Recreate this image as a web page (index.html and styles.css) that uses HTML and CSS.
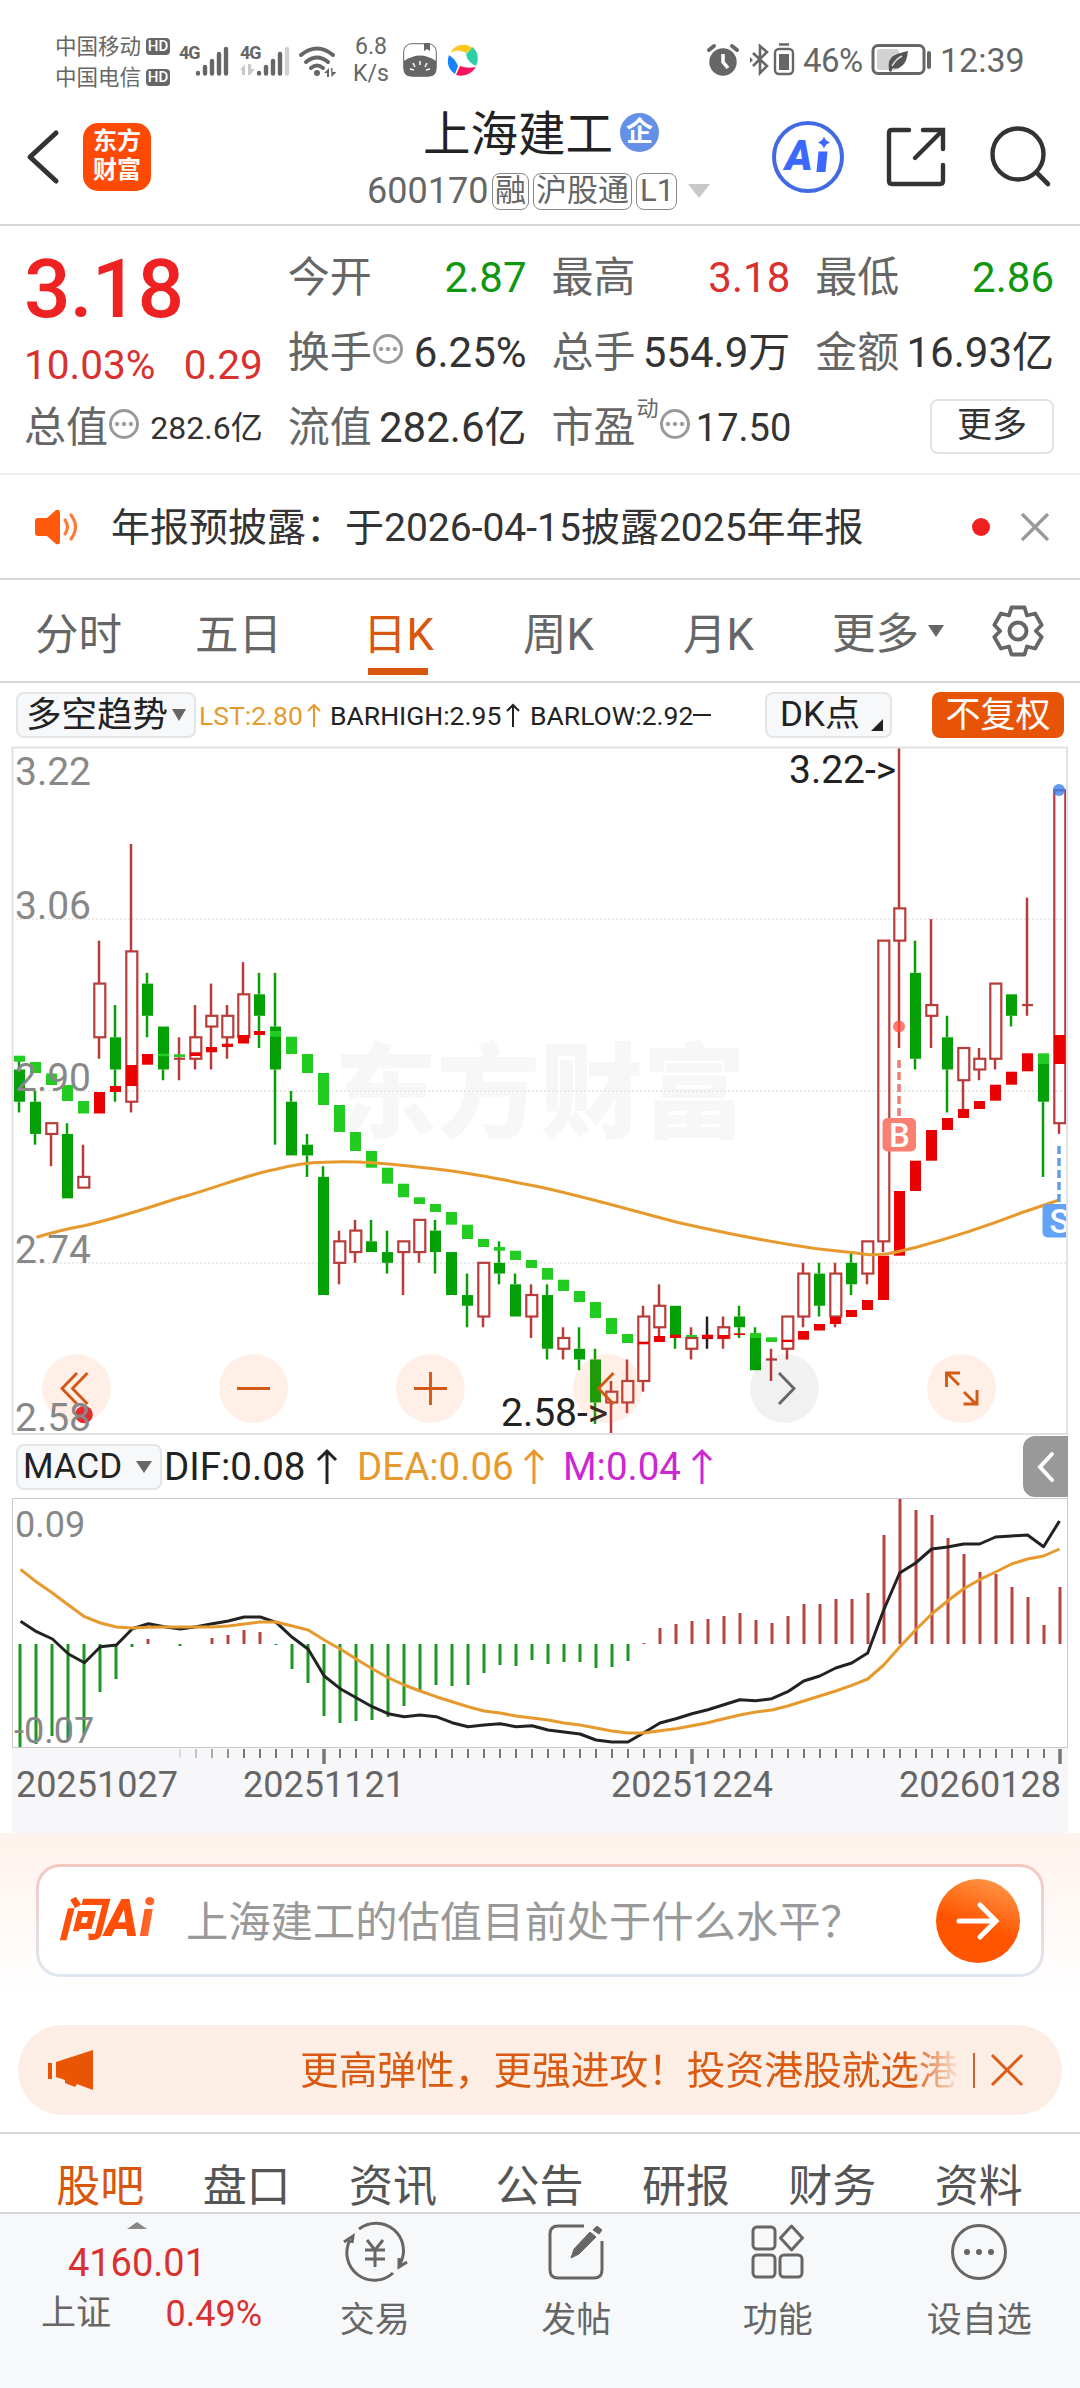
FILE: index.html
```html
<!DOCTYPE html>
<html lang="zh-CN">
<head>
<meta charset="utf-8">
<title>上海建工 600170</title>
<link rel="stylesheet" href="styles.css">
</head>
<body>
<div class="status">
  <div class="carriers">
    <div class="carrier">中国移动<span class="hd">HD</span></div>
    <div class="carrier">中国电信<span class="hd">HD</span></div>
  </div>
  <svg class="signals" width="160" height="40" viewBox="0 0 160 40" fill="#666">
    <text x="0" y="19" class="g4">4G</text><text x="61" y="19" class="g4">4G</text>
    <g stroke="#666" stroke-width="4.4" stroke-linecap="round"><path d="M19 33v.5M26 27v6.500M33 21v12.500M40 14v19.500M47 9v24.500M80 33v.5M87 27v6.500M94 21v12.500M101 14v19.500"/><path stroke="#d0d0d0" d="M108 9v24.500"/></g>
    <path fill="#c8c8c8" d="M61 30l5-6v11h-3v-5zM69 24h3v5h4l-5 6h-2z"/>
    <g fill="none" stroke="#666" stroke-width="4" stroke-linecap="round"><path d="M122 15q16-13 32 0M127 22q11-9 22 0M132 28q6-5 12 0"/></g>
    <circle cx="138" cy="33" r="3"/><path d="M145 33l5-5v9h-2v-4zM152 28h1.500v4h4l-5 5z"/>
  </svg>
  <div class="speed">6.8<br>K/s</div>
  <svg class="melon" width="34" height="34" viewBox="0 0 34 34"><rect x=".7" y=".7" width="32.600" height="32.600" rx="8" fill="#fff" stroke="#666"/><path fill="#666" d="M21 0h6v8l-3-2-3 2zM1 18q16-11 32 0v9q0 6-6 6H7q-6 0-6-6z"/><path stroke="#fff" stroke-width="1.500" d="M17 18v4M10 20l2 4M24 20l-2 4M7 26l4 1M27 26l-4 1"/></svg>
  <svg class="pinwheel" width="34" height="34" viewBox="0 0 34 34"><path fill="#ffc61a" d="M4 10Q10 0 21 2l6 3-7 5Q12 5 4 10z"/><path fill="#2fcfa5" d="M27 4q8 9 3 19Q21 19 20 11z"/><path fill="#f8145c" d="M30 24q-7 11-20 8l4-9q8 3 16 1z"/><path fill="#1483fa" d="M3 12q7 5 9 11l-3 8Q-1 24 3 12z"/></svg>
  <svg class="alarm" width="92" height="34" viewBox="0 0 92 34"><circle cx="18" cy="19" r="13.700" fill="#666"/><path d="M18 11v8l5 6" stroke="#fff" stroke-width="3.500" fill="none"/><path d="M4 7l5-4M32 7l-5-4" stroke="#666" stroke-width="4" stroke-linecap="round"/>
    <path d="M48 10l14 13-7 7V3l7 6-14 14" fill="none" stroke="#666" stroke-width="2.600"/><path d="M45 14l3 3-3 3z" fill="#666"/>
    <rect x="70" y="6" width="18" height="25" rx="4" fill="none" stroke="#666" stroke-width="2.400"/><path d="M74 1.500h10" stroke="#666" stroke-width="2.500"/><rect x="74" y="11" width="10" height="16" fill="#666"/></svg>
  <span class="pct">46%</span>
  <svg class="batt" width="62" height="34" viewBox="0 0 62 34"><rect x="2" y="2.500" width="51" height="28" rx="5" fill="none" stroke="#666" stroke-width="3"/><rect x="6" y="6" width="22" height="21" rx="3" fill="#d2d2d2"/><path d="M18 28q-2-13 6-16 4-2 13-4-1 10-5 14-5 5-10 3l-2 4z" fill="#555"/><path d="M21 23q4-7 10-10" stroke="#ddd" stroke-width="1.500" fill="none"/><path d="M58 10v14" stroke="#666" stroke-width="4" stroke-linecap="round"/></svg>
  <span class="clock">12:39</span>
</div>

<header class="header">
  <svg class="back" width="34" height="56" viewBox="0 0 34 56"><path d="M30 4L4 28l26 24" fill="none" stroke="#333" stroke-width="5" stroke-linecap="round" stroke-linejoin="round"/></svg>
  <div class="logo">东方<br>财富</div>
  <div class="title">
    <div class="name">上海建工<span class="ent">企</span></div>
    <div class="code"><span>600170</span><i>融</i><i>沪股通</i><i>L1</i><b></b></div>
  </div>
  <svg class="ai" width="74" height="74" viewBox="0 0 74 74"><circle cx="37" cy="37" r="34" fill="none" stroke="#4169e1" stroke-width="4"/><text x="14" y="50" class="aitext">A</text><path fill="#3d68ff" d="M47.500 31.500h9l-2 20.500h-9zM53 16.500q1.500 4.500 6 6-4.500 1.500-6 6-1.500-4.500-6-6 4.500-1.500 6-6z"/></svg>
  <svg class="share" width="60" height="60" viewBox="0 0 60 60"><path d="M23 3H6q-3 0-3 3v48q0 3 3 3h48q3 0 3-3V38M37 3h20v19M57 3L29 31" fill="none" stroke="#333" stroke-width="4.400" stroke-linecap="round"/></svg>
  <svg class="search" width="60" height="60" viewBox="0 0 60 60"><circle cx="27" cy="28" r="25.500" fill="none" stroke="#333" stroke-width="4.400"/><path d="M46 47l11 11" stroke="#333" stroke-width="4.600" stroke-linecap="round"/></svg>
</header>

<section class="stats">
  <div class="quote"><div class="price">3.18</div><div class="chg"><span>10.03%</span><span>0.29</span></div></div>
  <div class="cell"><label>今开</label><span class="g">2.87</span></div>
  <div class="cell"><label>最高</label><span class="r">3.18</span></div>
  <div class="cell"><label>最低</label><span class="g">2.86</span></div>
  <div class="cell"><label>换手</label><em></em><span>6.25%</span></div>
  <div class="cell"><label>总手</label><span>554.9万</span></div>
  <div class="cell"><label>金额</label><span>16.93亿</span></div>
  <div class="cell"><label>总值</label><em></em><span class="small">282.6亿</span></div>
  <div class="cell"><label>流值</label><span>282.6亿</span></div>
  <div class="cell"><label>市盈</label><sup>动</sup><em></em><span class="mid">17.50</span></div>
  <div class="cell"><button class="more">更多</button></div>
</section>

<section class="notice">
  <svg width="46" height="38" viewBox="0 0 46 38"><path fill="#ff5a0a" d="M4 10h9L22 2q4-1 4 3v28q0 4-4 3l-9-8H4q-3 0-3-3V13q0-3 3-3z"/><path d="M31 12q5 7 0 14M37 7q9 12 0 24" fill="none" stroke="#ff7b38" stroke-width="3.200" stroke-linecap="round"/></svg>
  <p>年报预披露：于2026-04-15披露2025年年报</p>
  <span class="dot"></span>
  <svg class="x" width="30" height="30" viewBox="0 0 30 30"><path d="M2 2l26 26M28 2L2 28" stroke="#999" stroke-width="3.200"/></svg>
</section>

<nav class="periods">
  <a>分时</a><a>五日</a><a class="on">日K</a><a>周K</a><a>月K</a><a class="drop">更多<b></b></a>
  <svg width="54" height="54" viewBox="-27 -27 54 54"><g fill="none" stroke="#666" stroke-width="4" stroke-linejoin="round"><path transform="scale(.94)" d="M-7-25H7l2.500 8.500 8.700-2.100 7 12.200L19 0l6.200 6.400-7 12.200-8.700-2.100L7 25H-7l-2.500-8.500-8.700 2.100-7-12.200L-19 0l-6.200-6.400 7-12.200 8.700 2.100z"/><circle r="8.500"/></g></svg>
</nav>

<div class="indicator">
  <div class="pill trend">多空趋势<b></b></div>
  <span class="val o">LST:2.80</span><svg class="up o" viewBox="0 0 14 24"><path d="M7 24V2M1 8l6-6 6 6"/></svg>
  <span class="val high">BARHIGH:2.95</span><svg class="up" viewBox="0 0 14 24"><path d="M7 24V2M1 8l6-6 6 6"/></svg>
  <span class="val low">BARLOW:2.92</span><span class="dash"></span>
  <div class="pill dk">DK点<b></b></div>
  <div class="adj">不复权</div>
</div>

<svg class="kline" width="1080" height="688" viewBox="0 747 1080 688">
  <defs><clipPath id="plot"><rect x="12" y="747" width="1056" height="688"/></clipPath></defs>
  <text class="mark" x="334" y="1130">东方财富</text>
  <path class="grid" d="M12 919H1067M12 1091H1067M12 1263H1067"/>
  <g id="candles"></g><g id="trend"></g>
  <path class="ma" d="M36.500 1237.300C50 1233 60 1230 84 1225.700C130 1215 170 1200 186 1196C220 1186 250 1174 275 1169.500C290 1165.500 305 1162.500 324 1162.200C360 1161 385 1163 420 1167.300C460 1171 500 1179 540 1187C590 1198 630 1210 678 1222.500C720 1232 770 1242 815 1248.500C840 1251 855 1253 867 1254.500C885 1255.500 893 1253 919 1246.500C960 1235 1000 1221 1022 1212.500Q1042 1206 1059 1200"/>
  <g class="axis"><text x="15" y="785">3.22</text><text x="15" y="919">3.06</text><text x="15" y="1091">2.90</text><text x="15" y="1263">2.74</text></g>
  <g class="tag"><text x="789" y="783">3.22-&gt;</text><text x="501" y="1426">2.58-&gt;</text></g>
  <path d="M899 1060v56" stroke="#f08070" stroke-width="3.500" stroke-dasharray="8 4"/><circle cx="899" cy="1026.500" r="6" fill="#ff4d3c" opacity=".75"/>
  <rect x="882.500" y="1118" width="33.500" height="33.500" rx="5" fill="#f97f70"/><text class="bs" x="899.500" y="1147">B</text>
  <g clip-path="url(#plot)"><path d="M1059 1146v57" stroke="#5f9fe8" stroke-width="3.500" stroke-dasharray="8 4"/><circle cx="1059" cy="790" r="6" fill="#3a7fee" opacity=".8"/><rect x="1042.500" y="1204" width="33.500" height="33.500" rx="5" fill="#62a2f8"/><text class="bs" x="1059.500" y="1233">S</text></g>
  <g fill="#ff6e28" fill-opacity=".11"><circle cx="76.500" cy="1388.500" r="34.500"/><circle cx="253.500" cy="1388.500" r="34.500"/><circle cx="430.500" cy="1388.500" r="34.500"/><circle cx="607.500" cy="1388.500" r="34.500"/><circle cx="961.500" cy="1388.500" r="34.500"/></g>
  <circle cx="784.500" cy="1388.500" r="34.500" fill-opacity=".055"/>
  <path d="M77 1373l-15 15.500 15 15.500M87.500 1373l-15 15.500 15 15.500M237 1388.500h33M414 1388.500h33M430.500 1372v33M613.500 1373l-15 15.500 15 15.500M959 1385l-12.500-12.500M946.500 1387v-14h13.500M964 1392l12.500 12.500M977 1390v14h-13.500" fill="none" stroke="#d25a14" stroke-width="2.900"/>
  <path d="M779 1373l15 15.500-15 15.500" fill="none" stroke="#666" stroke-width="2.900"/>
  <circle cx="84" cy="1414.500" r="8.800" fill="#e52d2d"/>
  <text class="axlast" x="15" y="1431">2.58</text>
  <path class="frame" d="M12.500 747.500H1067V1434H12.500z"/>
</svg>

<div class="macdbar">
  <div class="pill macd">MACD<b></b></div>
  <span>DIF:0.08</span><svg class="up2" viewBox="0 0 20 35"><path d="M10 35V2M1 11l9-9 9 9"/></svg>
  <span class="o dea">DEA:0.06</span><svg class="up2 o" viewBox="0 0 20 35"><path d="M10 35V2M1 11l9-9 9 9"/></svg>
  <span class="m">M:0.04</span><svg class="up2 m" viewBox="0 0 20 35"><path d="M10 35V2M1 11l9-9 9 9"/></svg>
  <div class="fold"><svg width="16" height="30" viewBox="0 0 16 30"><path d="M14 2L2 15l12 13" fill="none" stroke="#fff" stroke-width="4" stroke-linecap="round"/></svg></div>
</div>

<svg class="macdplot" width="1080" height="335" viewBox="0 1498 1080 335">
  <rect x="12" y="1748" width="1056" height="85" fill="#f7f7fa"/>
  <g id="hist"></g>
  <polyline id="dif" class="line" stroke="#222"/><polyline id="dea" class="line" stroke="#e69a2e"/>
  <path d="M12.500 1498.500H1067.500V1747.500H12.500z" fill="none" stroke="#c8c8c8"/>
  <g class="maxis"><text x="15" y="1537">0.09</text><text x="14" y="1743">-0.07</text></g>
  <g id="ticks" stroke="#777"></g>
  <g class="dates"><text x="16" y="1797">20251027</text><text x="243" y="1797">20251121</text><text x="611" y="1797">20251224</text><text x="899" y="1797">20260128</text></g>
</svg>

<section class="ask">
  <div class="askbox">
    <span class="asklogo"><u>问</u>Ai</span>
    <span class="q">上海建工的估值目前处于什么水平？</span>
    <span class="go"><svg width="44" height="38" viewBox="0 0 44 38"><path d="M3 19h36M24 3l16 16-16 16" fill="none" stroke="#fff" stroke-width="5" stroke-linecap="round"/></svg></span>
  </div>
</section>

<div class="banner">
  <svg width="46" height="40" viewBox="0 0 46 40"><path fill="#ea5504" d="M0 13h4v16H0zM8 12L45 0v40l-16-6-2 3-10-4v-3l-9-3z"/></svg>
  <p>更高弹性，更强进攻！投资港股就选港</p>
  <i></i>
  <svg class="bx" width="34" height="34" viewBox="0 0 34 34"><path d="M2 2l30 30M32 2L2 32" stroke="#e05a14" stroke-width="3"/></svg>
</div>

<nav class="sections"><a class="on">股吧</a><a>盘口</a><a>资讯</a><a>公告</a><a>研报</a><a>财务</a><a>资料</a></nav>

<footer class="dock">
  <div class="index"><b></b><strong>4160.01</strong><div><span>上证</span><em>0.49%</em></div></div>
  <a><svg viewBox="-33 -30 66 60"><path d="M-16-23A27.500 27.500 0 0 1 25 12M18 21A27.500 27.500 0 0 1-25-12M-31-10l9-6-1 7M32 10l-8 5V6M-8-12L0-2 8-12M0-2v17M-10-2h20M-10 7h20"/></svg>交易</a>
  <a><svg viewBox="-33 -30 66 60"><path d="M8-26H-18Q-26-26-26-18V18Q-26 26-18 26H18Q26 26 26 18V-11"/><path d="M-5 6l3-9L14-20l6 5L3 2zM17-22l4-4 5 4-3 4z" fill="#666" stroke-width="1"/></svg>发帖</a>
  <a><svg viewBox="-33 -30 66 60"><rect x="-25" y="-25" width="22" height="22" rx="4"/><rect x="-25" y="3" width="22" height="22" rx="4"/><rect x="2" y="3" width="22" height="22" rx="4"/><path d="M13.500-26l11 12-11 12-11-12z" stroke-linejoin="round"/></svg>功能</a>
  <a><svg viewBox="-33 -30 66 60"><circle r="26.500"/><g fill="#666" stroke="none"><circle cx="-12" r="3"/><circle r="3"/><circle cx="12" r="3"/></g></svg>设自选</a>
</footer>
<script src="chart.js"></script>
</body>
</html>
```
FILE: styles.css
```css
* { box-sizing: border-box; }
body { margin: 0; width: 1080px; background: #fff; color: #333; font-family: Roboto, "Noto Sans CJK SC", sans-serif; }
p { margin: 0; }
i, em { font-style: normal; }
svg { display: block; flex: none; overflow: visible; }
b { display: block; width: 0; height: 0; }

/* phone status bar */
.status { height: 105px; display: flex; align-items: center; padding: 15px 0 0 55px; color: #666; white-space: nowrap; }
.carriers { width: 117px; margin-top: 3px; }
.carrier { display: flex; align-items: center; font-size: 21.5px; line-height: 31px; height: 31px; }
.hd { margin-left: 5px; width: 24px; height: 17px; border-radius: 4px; background: #666; color: #fff; font-size: 15px; line-height: 17px; text-align: center; font-weight: 500; }
.signals { margin-left: 7px; }
.g4 { font: 700 18px Roboto; letter-spacing: -1px; }
.speed { margin-left: 14px; width: 36px; font-size: 23px; line-height: 27px; text-align: center; }
.melon { margin-left: 14px; }
.pinwheel { margin-left: 9px; }
.alarm { margin-left: 225px; }
.pct { margin-left: 6px; font-size: 33px; width: 64px; letter-spacing: -.5px; }
.batt { margin-left: 4px; }
.clock { margin-left: 7px; font-size: 34px; }

/* title bar */
.header { height: 121px; display: flex; align-items: flex-start; border-bottom: 2px solid #d6d6d6; padding-left: 26px; }
.back { margin-top: 24px; }
.logo { margin: 18px 0 0 23px; width: 68px; height: 68px; border-radius: 15px; background: #ff4a05; color: #fff; font-weight: 700; font-size: 24px; line-height: 29px; text-align: center; padding-top: 4px; }
.title { width: 400px; margin: -3px 0 0 182px; padding-left: 34px; }
.name { display: flex; align-items: center; height: 57px; margin-left: 56px; font-size: 47.500px; color: #222; white-space: nowrap; }
.ent { margin: 3px 0 0 7px; width: 39px; height: 39px; border-radius: 50%; background: #6590e8; color: #fff; font-size: 27px; font-weight: 700; line-height: 38px; text-align: center; }
.code { display: flex; align-items: center; height: 64px; font-size: 36px; color: #666; }
.code span { width: 125px; }
.code i { margin-right: 4px; height: 37px; border: 1.500px solid #888; border-radius: 8px; font-size: 31px; line-height: 34px; padding: 0 2px; }
.code i:nth-of-type(3) { width: 41px; padding: 0 3px; }
.code b { margin-left: 7px; border: 11px solid transparent; border-top: 14px solid #c8c8c8; border-bottom: 0; }
.ai { margin: 15px 0 0 38px; }
.aitext { font: italic 900 42px Roboto; fill: #3d68ff; }
.share { margin: 22px 0 0 41px; }
.search { margin: 21px 0 0 45px; }

/* quote figures */
.stats { height: 249px; border-bottom: 2px solid #eee; padding: 14px 26px 10px 25px; display: grid; grid-template-columns: repeat(4, 1fr); grid-template-rows: repeat(3, 75px); column-gap: 26px; }
.quote { grid-row: span 2; color: #ee2222; }
.price { font-size: 82px; font-weight: 500; line-height: 98px; letter-spacing: -.8px; margin-left: -1px; }
.chg { display: flex; justify-content: space-between; font-size: 40.500px; line-height: 54px; color: #d93030; margin-left: -1px; }
.cell { display: flex; align-items: center; font-size: 42px; line-height: 60px; white-space: nowrap; color: #333; }
.cell label { color: #666; font-size: 42px; margin-left: -1px; }
.cell span { margin-left: auto; }
.g { color: #109610; }
.r { color: #d93030; }
.cell .small { font-size: 32px; }
.cell .mid { font-size: 38px; margin-right: -1px; }
.cell em { width: 30px; height: 30px; border: 3px solid #999; border-radius: 50%; margin: -8px 0 0 1px; background: radial-gradient(circle, #999 1.8px, transparent 2.4px) center / 7px 100% repeat-x content-box; padding: 0 2px; }
.cell sup { font-size: 22px; line-height: 24px; margin: -38px 0 0 1px; color: #666; }
.more { margin-left: auto; width: 124px; height: 55px; border: 2px solid #e2e2e2; border-radius: 8px; background: #fff; font: 35px/48px Roboto, "Noto Sans CJK SC", sans-serif; color: #333; padding: 0; margin-top: -3px; }

/* announcement */
.notice { height: 105px; border-bottom: 2px solid #d9d9d9; display: flex; align-items: center; padding: 0 30px 0 34px; font-size: 39px; }
.notice p { margin: -6px 0 0 31px; flex: 1; white-space: nowrap; }
.dot { width: 18px; height: 18px; border-radius: 50%; background: #f02020; margin-right: 30px; }

/* period tabs */
.periods { height: 103px; border-bottom: 2px solid #d6d6d6; display: flex; align-items: center; font-size: 43.500px; color: #666; }
.periods a { width: 160px; height: 101px; line-height: 111px; text-align: center; padding-right: 3px; }
.periods .on { color: #d8560d; background: linear-gradient(#d8560d, #d8560d) 48px 88px / 60px 7px no-repeat; }
.periods .drop { display: flex; justify-content: center; align-items: center; padding: 8px 0 0 16px; }
.drop b { margin: -8px 0 0 9px; border: 8px solid transparent; border-top: 12px solid #666; border-bottom: 0; }
.periods svg { margin-left: 31px; }

/* overlay indicator readings */
.indicator { height: 64px; display: flex; align-items: center; padding: 0 16px 0; white-space: nowrap; color: #222; }
.pill { height: 46px; border: 2px solid #e4e5e9; border-radius: 8px; background: #f7f8fa; display: flex; align-items: center; color: #222; line-height: 42px; }
.trend { width: 180px; padding-left: 8px; font-size: 35.500px; }
.trend b { margin-left: 4px; border: 7px solid transparent; border-top: 12px solid #666; border-bottom: 0; }
.val { font-size: 26.500px; margin-left: 3px; width: 103px; }
.val.high { margin-left: 9px; width: 171px; }
.val.low { margin-left: 10px; width: 160px; }
.o { color: #e69a2e; }
.m { color: #cc28d2; }
.up { width: 14px; height: 24px; margin-left: 5px; fill: none; stroke: currentColor; stroke-width: 2; }
.dash { width: 18px; height: 2px; background: #222; margin-left: 3px; }
.dk { margin-left: auto; width: 127px; padding-left: 13px; font-size: 35px; }
.dk b { margin: 20px 0 0 11px; border-left: 12px solid transparent; border-bottom: 12px solid #222; }
.adj { margin-left: 40px; width: 132px; height: 46px; border-radius: 8px; background: #e85407; color: #fff; font-size: 35px; line-height: 47px; text-align: center; }

/* candlestick plot */
.mark { font: 900 103px "Noto Sans CJK SC"; fill: #f7f7f7; }
.grid { stroke: #e4e4e4; stroke-width: 1.500; stroke-dasharray: 2 2; }
.frame { fill: none; stroke: #e2e2e2; stroke-width: 2; }
.ma { fill: none; stroke: #e69a2e; stroke-width: 3; }
.axis, .axlast { font: 39px Roboto; fill: #888; }
.tag { font: 39px Roboto; fill: #222; }
.bs { font: 500 33px Roboto; fill: #fff; text-anchor: middle; }

/* MACD */
.macdbar { height: 63px; display: flex; align-items: center; padding-left: 16px; font-size: 38.500px; color: #222; white-space: nowrap; }
.macd { width: 146px; font-size: 35px; padding-left: 5px; }
.macd b { margin-left: 14px; border: 8px solid transparent; border-top: 12px solid #666; border-bottom: 0; }
.macdbar span { margin-left: 2px; width: 146px; }
.macdbar .dea { margin-left: 20px; width: 160px; }
.macdbar span.m { margin-left: 19px; width: 122px; }
.up2 { width: 20px; height: 35px; margin-left: 7px; fill: none; stroke: currentColor; stroke-width: 3; }
.fold { margin-left: auto; margin-right: 12px; width: 45px; height: 61px; border-radius: 12px 0 0 12px; background: #999; display: flex; align-items: center; justify-content: center; }
.line { fill: none; stroke-width: 3; stroke-linejoin: round; }
.maxis { font: 36px Roboto; fill: #888; }
.dates { font: 36px Roboto; fill: #666; }

/* question box */
.ask { height: 192px; padding: 31px 36px 0; background: linear-gradient(#fff2ec, #fff 160px); }
.askbox { height: 113px; border: 3px solid transparent; border-radius: 24px; background: linear-gradient(#fff, #fff) padding-box, linear-gradient(#f3c8c0, #dfe7f2) border-box; display: flex; align-items: center; padding-left: 19px; }
.asklogo { width: 128px; font: italic 900 51px Roboto, "Noto Sans CJK SC"; white-space: nowrap; letter-spacing: 1px; background: linear-gradient(100deg, #ff4e08 60%, #f89070 85%); -webkit-background-clip: text; background-clip: text; color: transparent; line-height: 60px; margin-top: -2px; }
.asklogo u { font-size: 46px; text-decoration: none; }
.q { font-size: 42.300px; color: #999; white-space: nowrap; margin-top: -5px; }
.go { margin-left: auto; margin-right: 21px; width: 84px; height: 84px; border-radius: 50%; background: linear-gradient(20deg, #ff5500 45%, #ff9a4c 95%); display: flex; align-items: center; justify-content: center; }

/* promotion strip */
.banner { margin: 0 18px; height: 90px; border-radius: 45px; background: #fdeee5; display: flex; align-items: center; padding: 0 38px 0 30px; }
.banner p { margin: -7px 0 0 206px; width: 658px; overflow: hidden; white-space: nowrap; font-size: 38.700px; color: #d95a10; -webkit-mask-image: linear-gradient(90deg, #000 610px, transparent 662px); mask-image: linear-gradient(90deg, #000 610px, transparent 662px); }
.banner i { width: 2px; height: 35px; background: #c8632a; margin-left: 15px; }
.banner .bx { margin-left: auto; }

/* content tabs */
.sections { margin-top: 17px; height: 82px; border-top: 2px solid #d8d9dc; border-bottom: 2px solid #d3d5da; display: flex; padding: 0 28px 0 27px; font-size: 44px; color: #555; overflow: hidden; }
.sections a { flex: 1; text-align: center; line-height: 107px; }
.sections .on { color: #d8560d; }

/* bottom dock */
.dock { height: 174px; background: #f7f8fa; display: flex; color: #666; font-size: 35px; }
.dock a { flex: 1; display: flex; flex-direction: column; align-items: center; line-height: 50px; }
.dock a svg { width: 66px; height: 60px; margin: 8px 0 14px; fill: none; stroke: #666; stroke-width: 3; }
.index { width: 274px; display: flex; flex-direction: column; align-items: center; }
.index b { margin-top: 8px; border: 10px solid transparent; border-bottom: 7px solid #888; border-top: 0; }
.index strong { font-size: 38px; line-height: 46px; font-weight: 400; color: #d93030; margin-top: 11px; }
.index div { width: 220px; display: flex; justify-content: space-between; margin: 3px 0 0 31px; align-self: flex-start; padding-left: 10px; line-height: 50px; }
.index em { font-size: 36px; color: #d93030; margin-right: -11px; }
```
FILE: chart.js
```js
// Each candle: high, body top, body bottom, low (in cents) and r(ise), g(fall), k(flat)
const candles = `293 292 289 288 g|290 289 286 285 g|287 287 286 283 r|287 286 280 280 g|285 282 281 281 r|304 300 295 293 r|298 295 292 289 g|313 303 289 288 r|301 300 297 295 g|296 296 292 291 g|295 293 293 291 r|298 295 293 292 r|300 297 296 292 r|298 297 295 293 r|302 299 295 295 r|301 299 297 294 g|301 296 292 285 g|290 289 284 284 g|286 285 284 282 g|283 282 271 271 g|277 276 274 272 r|278 277 275 274 r|278 276 275 275 g|277 275 274 273 g|276 276 275 271 r|278 278 275 274 r|278 277 275 273 g|275 275 271 271 g|273 271 270 268 g|274 274 269 268 r|276 274 273 272 g|273 272 269 269 g|272 271 269 267 r|272 271 266 265 g|268 267 266 265 r|268 266 265 264 g|266 265 261 259 g|263 262 261 258 r|265 263 261 260 r|270 269 263 262 r|272 270 268 267 r|270 270 267 266 g|268 267 266 265 r|269 267 267 266 k|269 268 267 266 r|270 269 268 267 g|268 267 264 264 g|266 265 265 263 r|269 269 266 265 r|274 273 269 268 r|274 273 270 269 g|274 273 269 268 r|275 274 272 271 g|276 276 273 272 r|304 304 276 275 r|322 307 304 294 r|304 301 293 292 g|306 298 297 294 r|297 295 292 288 g|294 294 291 288 r|294 293 292 291 r|300 300 293 292 r|299 299 297 296 g|308 298 298 297 r|293 293 289 282 g|318 318 287 286 r`.split('|').map(s => s.split(' '));

// Trend blocks: colour, top y, bottom y
const trend = `g1055.7 1061.7|g1062 1073|g1073.500 1085|g1085 1101|g1101 1113.500|r1092 1113.500|r1086 1092|r1065 1086|r1054 1064.700|g1053.700 1056.300|g1054.300 1057|r1052.300 1056|r1047 1052.300|r1043.700 1047|r1035 1043.500|r1031 1035|g1031 1036.700|g1036.700 1054|g1054 1073|g1073 1105|g1105 1132|g1132 1151|g1151 1167.700|g1167.700 1183.700|g1183.700 1197.300|g1197.300 1204|g1204 1212|g1212 1224.700|g1224.700 1239|g1239 1247|g1247 1250.700|g1250.700 1260|g1260 1268|g1268 1279.700|g1279.700 1291|g1291 1302|g1302 1318|g1318 1334|g1334 1343|r1341.700 1344.300|r1336 1342|r1334.700 1338|g1335 1337|r1334.700 1338.700|r1335 1338.500|r1333.300 1335|g1333 1338|g1337.300 1342|r1339.700 1342|r1331 1339.700|r1324 1330.500|r1317 1324|r1310 1317|r1300 1310|r1255.700 1300|r1191 1255.700|r1160.700 1191|r1130 1160.700|r1118 1130|r1109 1118|r1101 1109|r1084.700 1100.700|r1071.700 1084.700|r1053.300 1071.300|g1053.300 1064|r1035 1064`.split('|');

const HIST = [951,942,918,933,912,786,747,651,627,642,648,642,624,615,600,606,645,717,759,858,879,873,870,861,828,783,765,768,765,729,705,708,690,702,696,696,714,711,693,639,594,582,573,567,558,549,570,579,558,522,522,507,507,489,315,204,240,255,324,372,426,432,471,501,585,471];
const DIF = [574,605,627,672,698,650,645,596,581,590,597,590,581,573,561,561,577,622,658,738,776,803,830,851,860,855,860,878,890,885,881,890,887,900,906,912,930,936,936,908,879,866,851,839,824,809,812,806,785,753,738,714,699,669,540,429,399,357,351,342,342,321,318,315,350,273];
const DEA = [418,456,489,525,560,579,591,594,592,591,591,591,591,588,582,576,576,588,600,630,657,687,716,743,765,783,800,815,830,843,849,858,864,870,879,885,894,903,909,909,902,896,887,878,866,855,846,840,828,813,798,783,766,747,705,651,600,552,513,476,449,426,402,387,378,357];

const y = c => 747.3 + (322 - c) * 10.74;
const cx = i => 19.5 + i * 16;
const COLORS = { r: '#b83c3a', g: '#05a005', k: '#222' };

document.getElementById('candles').innerHTML = candles.map(([h, t, b, l, c], i) => {
  const x = cx(i), col = COLORS[c], top = y(+t), bot = y(+b);
  const wick = (a, z) => a === z ? '' : `<path d="M${x - .5} ${a}V${z}" stroke="${col}" stroke-width="2.5"/>`;
  let body;
  if (t === b) body = `<path d="M${x - 5.5} ${top}h11" stroke="${col}" stroke-width="2.2"/>`;
  else if (c === 'r') body = `<rect x="${x - 5.2}" y="${top}" width="11" height="${bot - top}" fill="none" stroke="${col}" stroke-width="2.2"/>`;
  else body = `<rect x="${x - 5.5}" y="${top}" width="11" height="${bot - top}" fill="${col}"/>`;
  return wick(y(+h), top) + wick(bot, y(+l)) + body;
}).join('');

document.getElementById('trend').innerHTML = trend.map((s, i) => {
  const [a, b] = s.slice(1).split(' ').map(Number);
  return `<rect x="${cx(i) - 5.5}" y="${a}" width="11" height="${b - a}" fill="${s[0] === 'r' ? '#ea0000' : '#22cc22'}"/>`;
}).join('');

const my = v => 1430 + v / 3;
document.getElementById('hist').innerHTML = HIST.map((v, i) =>
  v === 642 ? '' : `<path d="M${20 + i * 16} 1644V${my(v)}" stroke="${v > 642 ? '#1f961f' : '#b84442'}" stroke-width="3"/>`).join('');
const line = a => a.map((v, i) => `${20.5 + i * 15.985},${my(v).toFixed(1)}`).join(' ');
document.getElementById('dif').setAttribute('points', line(DIF));
document.getElementById('dea').setAttribute('points', line(DEA));

let ticks = '';
for (let i = 10; i < 66; i++) {
  const major = i === 19 || i === 42 || i === 65;
  ticks += `<path d="M${20 + i * 16} 1749V${major ? 1764 : 1758}" stroke-width="${major ? 3.5 : 2}" opacity="${Math.min(1, (i - 9) / 5)}"/>`;
}
document.getElementById('ticks').innerHTML = ticks;
```
